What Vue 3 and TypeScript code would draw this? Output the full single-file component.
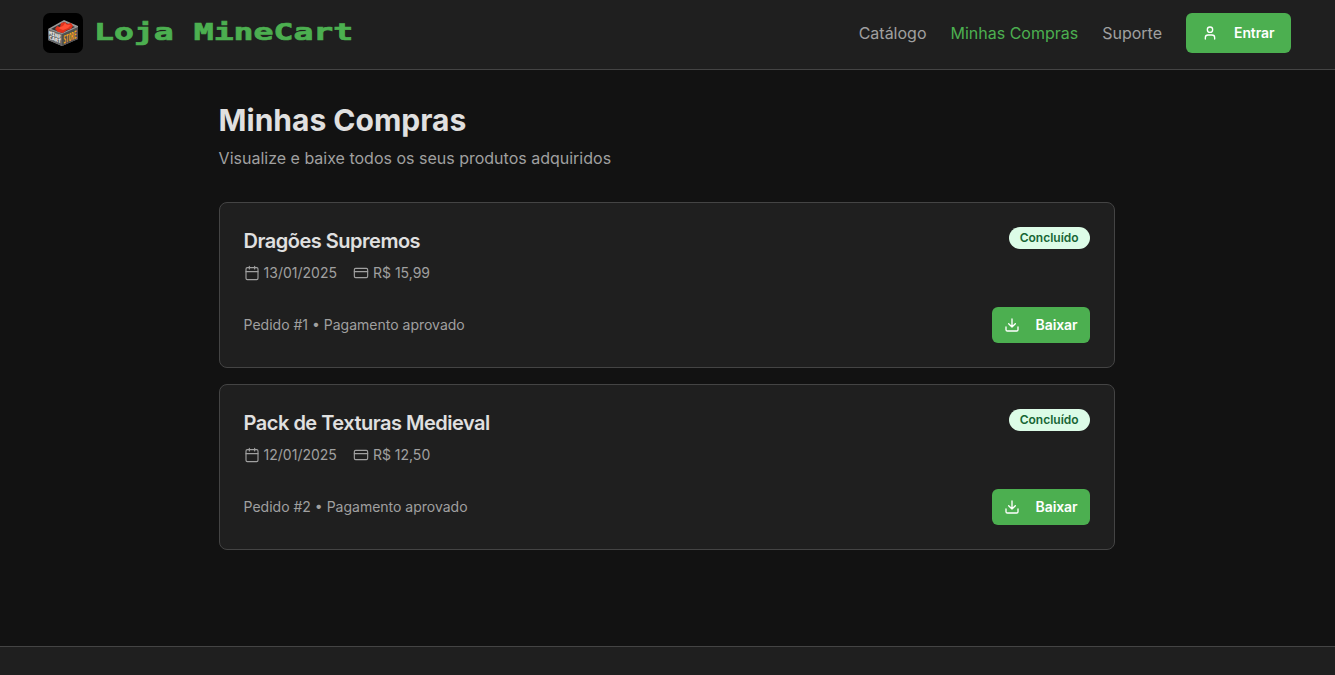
<script setup lang="ts">
interface Purchase {
  id: number
  name: string
  date: string
  price: string
}

const purchases: Purchase[] = [
  { id: 1, name: 'Dragões Supremos', date: '13/01/2025', price: 'R$ 15,99' },
  { id: 2, name: 'Pack de Texturas Medieval', date: '12/01/2025', price: 'R$ 12,50' },
]
</script>

<template>
  <div class="page">
    <header class="header">
      <div class="brand">
        <svg class="logo" viewBox="0 0 40 40">
          <rect width="40" height="40" rx="7" fill="#000" />
          <path d="M5 16 21 7 35 13 35 26 19 33 5 27Z" fill="#999" />
          <path d="M8 16 21 9 32 14 19 20Z" fill="#343434" />
          <path d="M12 16 14 13 17 14 18 10 22 9 24 11 28 10 30 13 28 16 24 17 20 20 15 19Z" fill="#df321c" />
          <path d="M15 15 20 13 22 10 24 12 28 12 25 15 20 17Z" fill="#ff5035" />
          <path d="M5 16 19 21 19 33 5 27Z" fill="#686868" />
          <path d="M19 21 35 14 35 26 19 33Z" fill="#505050" />
          <g class="logo-type">
            <text transform="matrix(1 .36 0 1 6 21.500)" textLength="12" lengthAdjust="spacingAndGlyphs" fill="#f4f4f4" font-size="5">MINE</text>
            <text transform="matrix(1 .36 0 1 6 26)" textLength="12" lengthAdjust="spacingAndGlyphs" fill="#f4f4f4" font-size="5">CART</text>
            <text transform="matrix(1 -.43 0 1 20.500 30.800)" textLength="13" lengthAdjust="spacingAndGlyphs" fill="#f9a51c" font-size="11">STORE</text>
          </g>
        </svg>
        <span class="brand-name"><span class="brand-text">Loja MineCart</span></span>
      </div>
      <nav class="nav">
        <a>Catálogo</a>
        <a class="active">Minhas Compras</a>
        <a>Suporte</a>
        <button class="btn login">
          <svg class="icon" viewBox="0 0 24 24"><path d="M19 21v-2a4 4 0 0 0-4-4H9a4 4 0 0 0-4 4v2" /><circle cx="12" cy="7" r="4" /></svg>
          Entrar
        </button>
      </nav>
    </header>
    <main class="main">
      <h1>Minhas Compras</h1>
      <p class="subtitle">Visualize e baixe todos os seus produtos adquiridos</p>
      <div class="list">
        <article v-for="item in purchases" :key="item.id" class="card">
          <div class="row top">
            <div>
              <h2>{{ item.name }}</h2>
              <div class="meta">
                <span><svg class="icon" viewBox="0 0 24 24"><path d="M8 2v4M16 2v4M3 10h18" /><rect x="3" y="4" width="18" height="18" rx="2" /></svg>{{ item.date }}</span>
                <span><svg class="icon" viewBox="0 0 24 24"><rect x="2" y="5" width="20" height="14" rx="2" /><path d="M2 10h20" /></svg>{{ item.price }}</span>
              </div>
            </div>
            <span class="badge">Concluído</span>
          </div>
          <div class="row bottom">
            <span class="status">Pedido #{{ item.id }} • Pagamento aprovado</span>
            <button class="btn download">
              <svg class="icon" viewBox="0 0 24 24"><path d="M21 15v4a2 2 0 0 1-2 2H5a2 2 0 0 1-2-2v-4M7 10l5 5 5-5M12 15V3" /></svg>
              Baixar
            </button>
          </div>
        </article>
      </div>
    </main>
    <footer class="footer"></footer>
  </div>
</template>

<style>
html, body { margin: 0; background: #121212; overflow: hidden; }
</style>

<style scoped>
* { box-sizing: border-box; }
.page { height: 675px; display: flex; flex-direction: column; font-family: Inter, sans-serif; color: #a0a0a0; background: #121212; }
.header { height: 70px; flex: none; display: flex; justify-content: space-between; align-items: flex-start; padding: 13px 44px 0 43px; background: #1f1f1f; border-bottom: 1px solid #444; }
.brand { display: flex; align-items: center; gap: 11px; height: 40px; }
.logo { width: 40px; height: 40px; overflow: visible; }
.logo-type { font-family: "DejaVu Sans Mono", monospace; font-weight: bold; }
.brand-name { width: 260px; height: 40px; }
.brand-text { display: inline-block; white-space: pre; font: bold 23px/39px "DejaVu Sans Mono", monospace; color: #4caf50; -webkit-text-stroke: 0.7px #4caf50; transform: scaleX(1.44); transform-origin: left; }
.nav { display: flex; align-items: center; gap: 24px; font-size: 16px; line-height: 24px; }
.active { color: #4caf50; }
.btn { display: flex; align-items: center; border: 0; border-radius: 6px; background: #4caf50; color: #fff; font: 600 14px/20px Inter, sans-serif; letter-spacing: -0.1px; }
.icon { width: 16px; height: 16px; flex: none; fill: none; stroke: currentColor; stroke-width: 2; stroke-linecap: round; stroke-linejoin: round; }
.login { width: 105px; height: 40px; padding: 0 16px; gap: 16px; }
.main { width: 896px; margin: 0 auto 0 218.6px; padding-top: 32px; flex: 1; }
h1 { margin: 0 0 8px; font-size: 30px; line-height: 36px; font-weight: 700; color: #e0e0e0; }
.subtitle { margin: 0 0 32px; font-size: 16px; line-height: 24px; }
.list { display: flex; flex-direction: column; gap: 16px; }
.card { height: 166px; padding: 24px; background: #1f1f1f; border: 1px solid #444; border-radius: 8px; }
.row { display: flex; justify-content: space-between; }
.top { align-items: flex-start; }
h2 { margin: 0 0 8px; font-size: 20px; line-height: 28px; font-weight: 600; letter-spacing: -0.5px; color: #e0e0e0; }
.meta { display: flex; gap: 16px; font-size: 14px; line-height: 20px; }
.meta span { display: flex; align-items: center; gap: 4px; }
.meta .icon { stroke-width: 1.7; }
.badge { height: 22px; padding: 0 11px; border-radius: 11px; background: #dcfce7; color: #166534; font-size: 12px; line-height: 22px; font-weight: 600; }
.bottom { align-items: center; margin-top: 24px; }
.status { font-size: 14px; line-height: 20px; }
.download { width: 98px; height: 36px; padding: 0 12px; gap: 16px; }
.footer { height: 29px; flex: none; background: #1f1f1f; border-top: 1px solid #444; }
</style>
